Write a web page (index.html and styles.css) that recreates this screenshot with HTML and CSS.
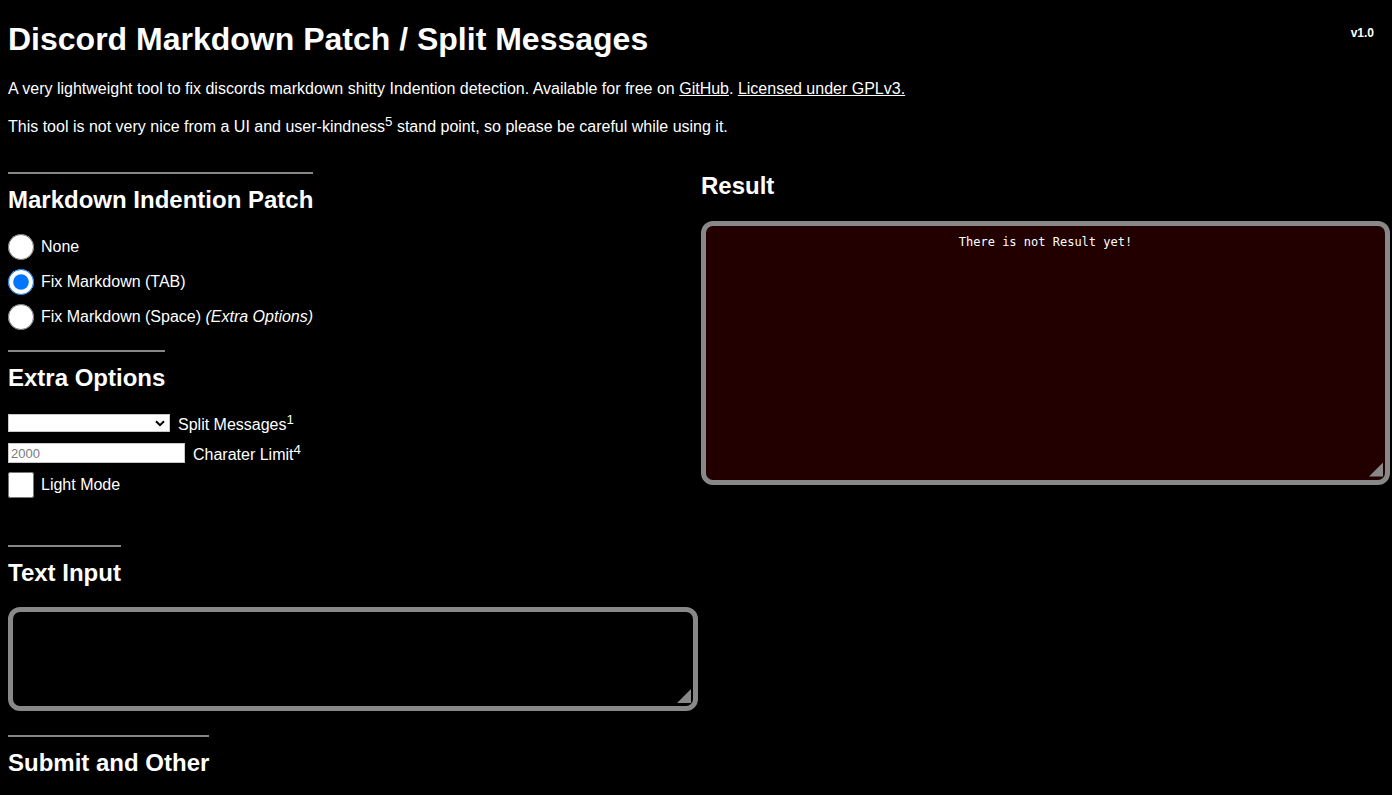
FILE: index.html
```html
<!DOCTYPE html>
<html lang="en">
<head>
<meta charset="utf-8">
<title>Discord Markdown Patch / Split Messages</title>
<link rel="stylesheet" href="styles.css">
</head>
<body>
<span class="version">v1.0</span>
<h1 class="title">Discord Markdown Patch / Split Messages</h1>
<p class="intro">A very lightweight tool to fix discords markdown shitty Indention detection. Available for free on <a href="#">GitHub</a>. <a href="#">Licensed under GPLv3.</a></p>
<p class="intro">This tool is not very nice from a UI and user-kindness<sup>5</sup> stand point, so please be careful while using it.</p>

<div class="columns">
  <div class="col col-left">
    <h2 class="sec">Markdown Indention Patch</h2>
    <div class="radios">
      <label class="radio-row"><input type="radio" name="mode" class="radio"><span>None</span></label>
      <label class="radio-row"><input type="radio" name="mode" class="radio" checked><span>Fix Markdown (TAB)</span></label>
      <label class="radio-row"><input type="radio" name="mode" class="radio"><span>Fix Markdown (Space) <em>(Extra Options)</em></span></label>
    </div>

    <h2 class="sec sec-extra">Extra Options</h2>
    <div class="opts">
      <div class="opt-row opt-select">
        <span class="select-wrap">
          <select class="select"><option></option></select>
          <svg class="chev" width="10" height="7" viewBox="0 0 10 7"><path d="M1 1.2 L5 5.2 L9 1.2" fill="none" stroke="#000" stroke-width="2"/></svg>
        </span>
        <span class="opt-label">Split Messages<sup>1</sup></span>
      </div>
      <div class="opt-row opt-input">
        <input type="text" class="num" placeholder="2000">
        <span class="opt-label">Charater Limit<sup>4</sup></span>
      </div>
      <label class="opt-row opt-check">
        <input type="checkbox" class="check">
        <span class="opt-label">Light Mode</span>
      </label>
    </div>

    <h2 class="sec sec-input">Text Input</h2>
    <div class="ta-wrap ta-input-wrap">
      <textarea class="ta ta-input"></textarea>
      <span class="grip"></span>
    </div>

    <h2 class="sec sec-submit">Submit and Other</h2>
  </div>

  <div class="col col-right">
    <h2 class="result-title">Result</h2>
    <div class="ta-wrap ta-result-wrap">
      <textarea class="ta ta-result" readonly>There is not Result yet!</textarea>
      <span class="grip"></span>
    </div>
  </div>
</div>
</body>
</html>
```

FILE: styles.css
```css
html {
  overflow: hidden;
  background: #000;
}

body {
  margin: 0;
  padding: 21.44px 8px 0;
  background: #000;
  color: #fff;
  font-family: "Liberation Sans", Arial, sans-serif;
  font-size: 16px;
  position: relative;
}

.version {
  position: absolute;
  top: 26px;
  right: 18px;
  font-size: 12px;
  font-weight: bold;
  line-height: 14px;
}

.title {
  font-size: 32px;
  font-weight: bold;
  margin: 0 0 21.44px;
}

.intro {
  margin: 16px 0;
}

.intro a {
  color: #fff;
  text-decoration: underline;
}

sup {
  font-size: 13.33px;
}

.columns {
  display: grid;
  grid-template-columns: 690px 689px;
  column-gap: 3px;
  margin-top: 36px;
  align-items: start;
}

.col {
  display: flex;
  flex-direction: column;
  align-items: flex-start;
}

h2 {
  font-size: 24px;
  font-weight: bold;
  margin: 0;
  line-height: normal;
}

.sec {
  border-top: 2px solid #878787;
  padding-top: 12px;
}

.sec-extra {
  margin-top: 15.5px;
}

.sec-input {
  margin-top: 46.5px;
}

.sec-submit {
  margin-top: 24px;
}

.radios {
  margin-top: 15px;
  display: flex;
  flex-direction: column;
}

.radio-row {
  display: flex;
  align-items: center;
  gap: 7px;
  height: 35px;
}

.radio {
  width: 26px;
  height: 26px;
  margin: 0;
  accent-color: #0075ff;
}

.opts {
  margin-top: 22.4px;
  display: flex;
  flex-direction: column;
}

.opt-row {
  display: flex;
  align-items: center;
  gap: 8px;
}

.opt-select {
  height: 18px;
}

.opt-input {
  height: 20px;
  margin-top: 11px;
}

.opt-check {
  height: 26px;
  margin-top: 9px;
  gap: 7px;
}

.opt-label {
  line-height: 18px;
  white-space: nowrap;
}

.select-wrap {
  position: relative;
  display: block;
  width: 162px;
  height: 18px;
}

.select {
  appearance: none;
  -webkit-appearance: none;
  display: block;
  width: 162px;
  height: 18px;
  margin: 0;
  padding: 0 2px;
  border: 1px solid #c8c8c8;
  border-radius: 0;
  background: #fff;
  font-family: "Liberation Sans", Arial, sans-serif;
  font-size: 12px;
}

.chev {
  position: absolute;
  right: 5px;
  top: 6px;
}

.num {
  display: block;
  box-sizing: border-box;
  width: 177px;
  height: 20px;
  margin: 0;
  padding: 0 2px;
  border: 1px solid #c8c8c8;
  background: #fff;
  font-family: "Liberation Sans", Arial, sans-serif;
  font-size: 13px;
  color: #000;
}

.num::placeholder {
  color: #7a7a7a;
}

.check {
  width: 26px;
  height: 26px;
  margin: 0;
}

.ta-wrap {
  position: relative;
}

.ta {
  display: block;
  box-sizing: border-box;
  border: 5px solid #888;
  border-radius: 12px;
  resize: none;
  outline: none;
  margin: 0;
}

.ta-input-wrap {
  margin-top: 20.4px;
}

.ta-input {
  width: 690px;
  height: 104px;
  background: #000;
  color: #fff;
  padding: 2px;
}

.result-title {
  margin: 0;
}

.ta-result-wrap {
  margin-top: 20.4px;
}

.ta-result {
  width: 689px;
  height: 264px;
  background: #220000;
  color: #fff;
  text-align: center;
  font-family: "DejaVu Sans Mono", "Liberation Mono", monospace;
  font-size: 12px;
  line-height: 14px;
  padding: 9px 2px 2px;
}

.grip {
  position: absolute;
  right: 7px;
  bottom: 8px;
  width: 14px;
  height: 14px;
  background: #888;
  clip-path: polygon(100% 0, 100% 100%, 0 100%);
}
```
